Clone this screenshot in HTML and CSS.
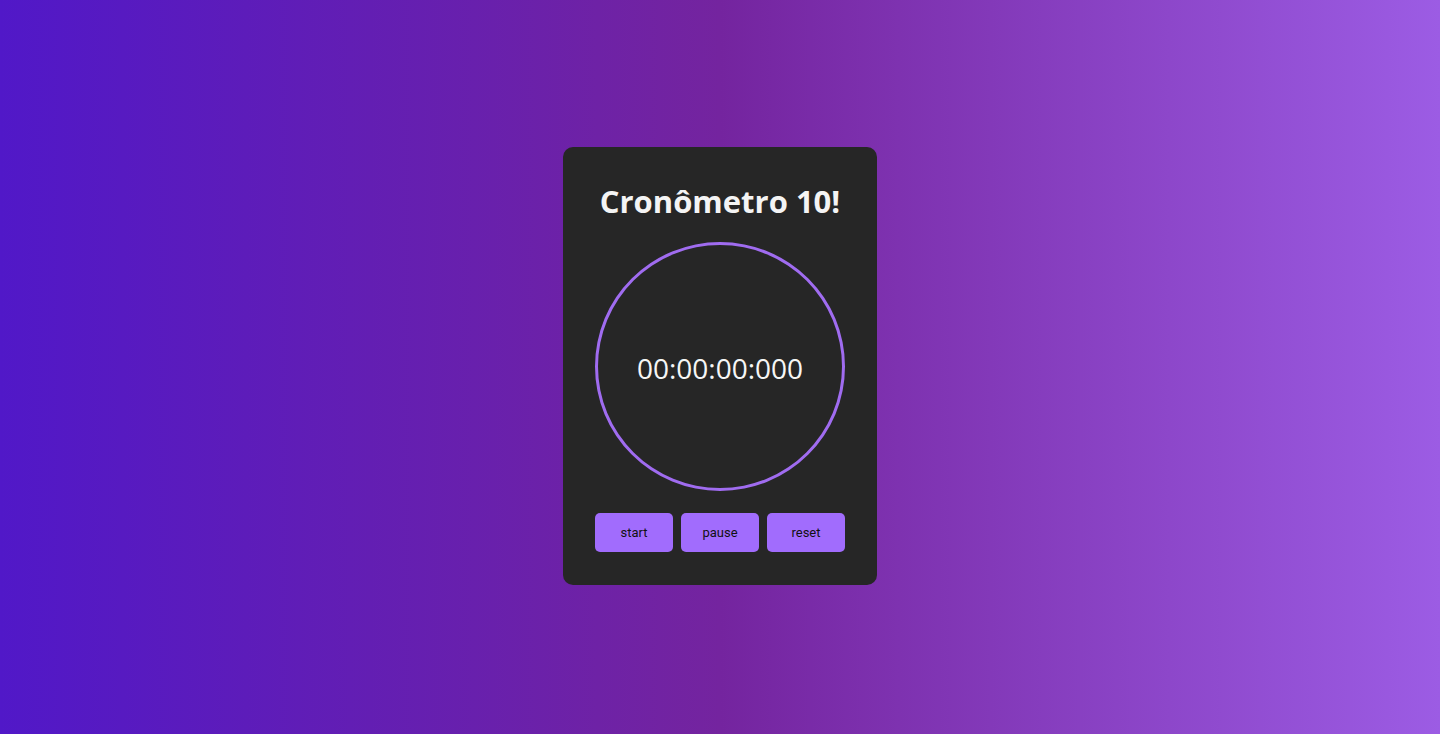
FILE: index.html
```html
<!DOCTYPE html>
<html lang="pt-BR">
<head>
<meta charset="utf-8">
<title>Cronômetro</title>
<link rel="stylesheet" href="styles.css">
</head>
<body>
<main class="card">
  <h1 class="title">Cronômetro 10!</h1>
  <div class="dial">
    <span class="time">00:00:00:000</span>
  </div>
  <div class="controls">
    <button class="btn">start</button>
    <button class="btn">pause</button>
    <button class="btn">reset</button>
  </div>
</main>
</body>
</html>
```
FILE: styles.css
```css
* { box-sizing: border-box; }
html, body { height: 100%; }
body {
  margin: 0;
  padding-bottom: 2px;
  display: flex;
  align-items: center;
  justify-content: center;
  background: linear-gradient(to right, #5118c8 0%, #74249f 50%, #9c5ce4 100%);
  font-family: "Open Sans", "Noto Sans", sans-serif;
}
.card {
  width: 314px;
  height: 438px;
  background: #262626;
  border-radius: 10px;
  padding: 32px 32px 33px;
  display: flex;
  flex-direction: column;
  align-items: center;
}
.title {
  margin: 0 0 23px;
  color: #f4f4f4;
  font-size: 31px;
  line-height: 40px;
  font-weight: 700;
  padding-top: 2px;
  height: 40px;
}
.dial {
  width: 250px;
  height: 250px;
  border: 3px solid #a06cf0;
  border-radius: 50%;
  display: flex;
  align-items: center;
  justify-content: center;
}
.time {
  color: #f6f6f6;
  font-size: 28px;
  font-weight: 400;
  padding-top: 2px;
}
.controls {
  margin-top: 22px;
  display: flex;
  gap: 8px;
}
.btn {
  width: 78px;
  height: 39px;
  border: none;
  border-radius: 5px;
  background: #a16cfd;
  color: #111;
  font-family: Roboto, "Liberation Sans", sans-serif;
  font-size: 13px;
  cursor: pointer;
}
```
